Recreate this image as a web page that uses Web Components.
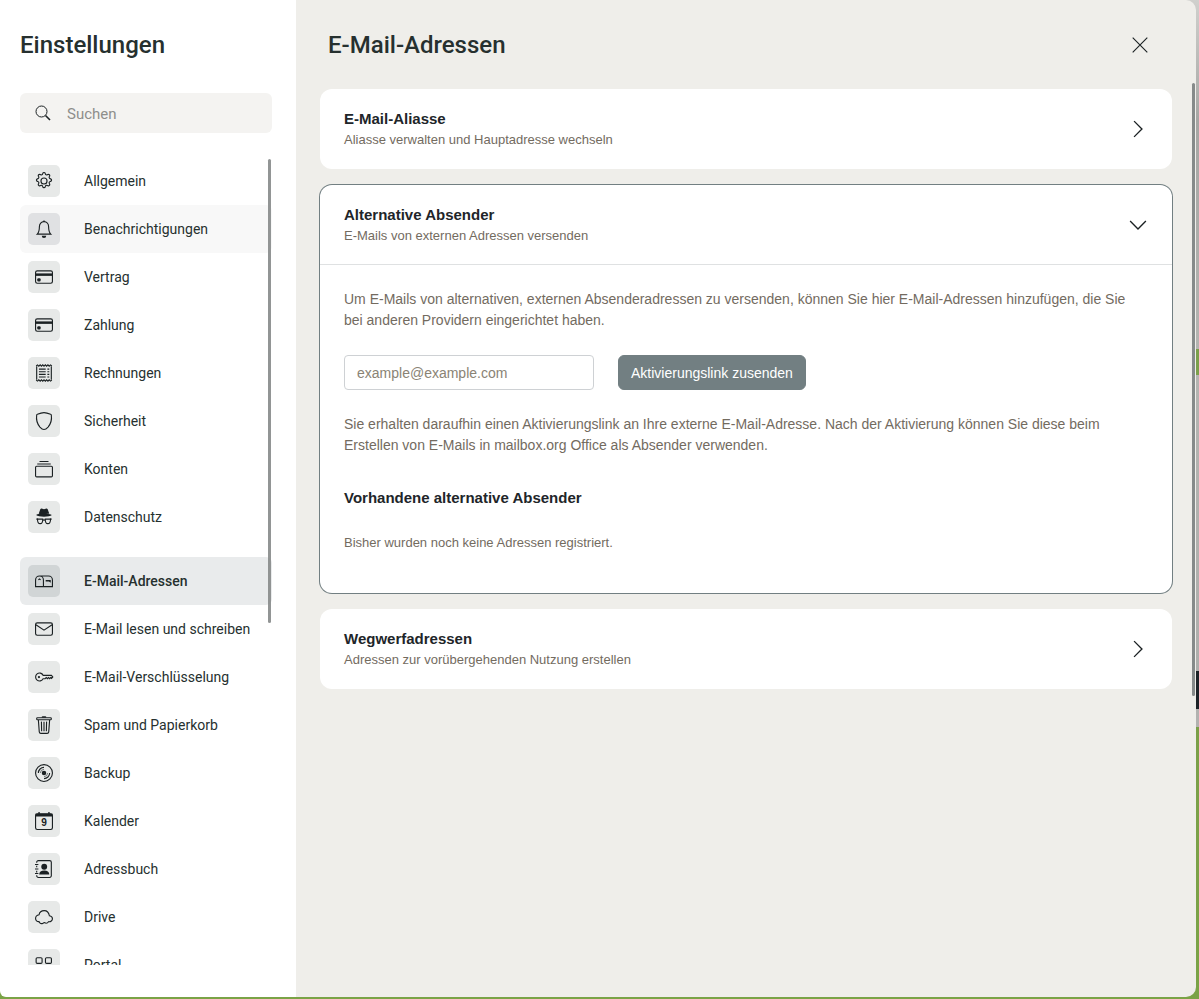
<!DOCTYPE html>
<html lang="de">
<head>
<meta charset="utf-8">
<meta name="viewport" content="width=device-width, initial-scale=1">
<title>Einstellungen</title>
<style>
    html, body {
        height: 100%;
        margin: 0;
    }

    body {
        font-family: "Liberation Sans", Arial, sans-serif;
        font-size: 14px;
        line-height: 21px;
        color: #736b5f;
        background: linear-gradient(#d0d0cd 0, #a6a6a4 120px, #b4b4b1 349px, #7ca04c 349px, #7ca04c 375px, #b4b4b1 375px, #aeaeac 671px, #1d2328 671px, #1d2328 709px, #b2b2b0 709px, #b2b2b0 727px, #7a9f48 727px, #7aa346 100%);
        --ui-font: Roboto, "Noto Sans", sans-serif;
        --ink: #26302f;
        --surface: #efeeea;
    }
</style>
</head>
<body>

<settings-dialog>
    <settings-sidebar slot="sidebar" heading="Einstellungen">
        <nav-item icon="gear">Allgemein</nav-item>
        <nav-item icon="bell" hovered>Benachrichtigungen</nav-item>
        <nav-item icon="card">Vertrag</nav-item>
        <nav-item icon="card">Zahlung</nav-item>
        <nav-item icon="receipt">Rechnungen</nav-item>
        <nav-item icon="shield">Sicherheit</nav-item>
        <nav-item icon="collection">Konten</nav-item>
        <nav-item icon="incognito">Datenschutz</nav-item>
        <nav-item icon="mailbox" group active>E-Mail-Adressen</nav-item>
        <nav-item icon="envelope">E-Mail lesen und schreiben</nav-item>
        <nav-item icon="key">E-Mail-Verschlüsselung</nav-item>
        <nav-item icon="trash">Spam und Papierkorb</nav-item>
        <nav-item icon="disc">Backup</nav-item>
        <nav-item icon="calendar">Kalender</nav-item>
        <nav-item icon="contacts">Adressbuch</nav-item>
        <nav-item icon="cloud">Drive</nav-item>
        <nav-item icon="grid">Portal</nav-item>
    </settings-sidebar>
    <settings-page heading="E-Mail-Adressen">
        <settings-card heading="E-Mail-Aliasse" hint="Aliasse verwalten und Hauptadresse wechseln"></settings-card>
        <settings-card heading="Alternative Absender" hint="E-Mails von externen Adressen versenden" open>
            <sender-form></sender-form>
        </settings-card>
        <settings-card heading="Wegwerfadressen" hint="Adressen zur vorübergehenden Nutzung erstellen"></settings-card>
    </settings-page>
</settings-dialog>

<script>
'use strict'

const icons = {
    search: '<circle cx="6.5" cy="6.5" r="5.500"/><path d="M10.500 10.500l4.500 4.500" stroke-width="1.600"/>',
    gear: '<circle cx="8" cy="8" r="2.700"/><path d="M6.900 1.300c.3-1.100 1.900-1.100 2.200 0l.2.500c.2.700 1 1 1.600.7l.5-.3c1-.5 2.100.6 1.600 1.600l-.3.500c-.3.600 0 1.400.7 1.600l.5.200c1.100.3 1.100 1.900 0 2.200l-.5.200c-.7.200-1 1-.7 1.600l.3.500c.5 1-.6 2.100-1.600 1.600l-.5-.3c-.6-.3-1.400 0-1.600.7l-.2.500c-.3 1.100-1.900 1.100-2.200 0l-.2-.5c-.2-.7-1-1-1.600-.7l-.5.300c-1 .5-2.100-.6-1.600-1.600l.3-.5c.3-.6 0-1.400-.7-1.600l-.5-.2c-1.100-.3-1.100-1.900 0-2.200l.5-.2c.7-.2 1-1 .7-1.600l-.3-.5c-.5-1 .6-2.100 1.600-1.600l.5.300c.6.300 1.400 0 1.600-.7z"/>',
    bell: '<path d="M8 1.400C5.600 1.400 3.900 3.400 3.900 6c0 2-.3 5-1.900 6.500h12C12.400 11 12.100 8 12.100 6c0-2.600-1.700-4.600-4.100-4.600z"/><path d="M6 14h4a2 2 0 0 1-4 0zM7 1.500a1 1 0 0 1 2 0z" class="fill"/>',
    card: '<rect x=".5" y="2.500" width="15" height="11" rx="1.500"/><path d="M0 4.800h16v2.200H0z" class="fill"/><rect x="2" y="9" width="3" height="3" rx="1" class="fill"/>',
    receipt: '<path d="M1.500 2v12M14.500 2v12"/><path d="M1 1.700l1.200-.9L3.400 2l1.200-1.200L5.700 2l1.200-1.200L8 2l1.200-1.200L10.300 2l1.200-1.200L12.600 2l1.200-1.200L15 1.700M1 14.300l1.200.9L3.400 14l1.200 1.200L5.700 14l1.200 1.200L8 14l1.200 1.200 1.100-1.200 1.200 1.200 1.100-1.200 1.200 1.200 1.200-.9"/><path d="M3.500 4.500h6M3.500 6.900h6M3.500 9.200h6M3.500 11.500h6M11 4.500h1.700M11 6.900h1.700M11 9.200h1.700M11 11.500h1.700"/>',
    shield: '<path d="M8 .5c-1.600 0-4.700 1-5.900 1.500a.8.8 0 0 0-.6.700c-.7 5 .9 8.400 2.900 10.700C5.700 14.800 7.200 15.500 8 15.500s2.300-.7 3.600-2.100c2-2.300 3.600-5.700 2.900-10.700a.8.8 0 0 0-.6-.7C12.700 1.500 9.600.5 8 .5z"/>',
    collection: '<rect x=".5" y="5.500" width="15" height="9.500" rx="1"/><path d="M2 3.500h12M4 1.300h8"/>',
    incognito: '<path d="M4.700 1.200c.4-.7 1.100-.9 1.800-.5.900.5 2.100.5 3 0 .7-.4 1.400-.2 1.800.5L12.700 5H3.300zM1 6.300C3 4.900 5.500 5.200 8 5.200s5 0 7 1.100c-1 1-4 1.400-7 1.400s-6-.4-7-1.400z" class="fill"/><path d="M2.200 9.900h4.700c0 2.300-.6 4-2.300 4s-2.400-1.700-2.400-4zM9.100 9.900h4.700c0 2.300-.7 4-2.400 4s-2.300-1.700-2.300-4z"/><path d="M6.900 11c.6-.5 1.600-.5 2.200 0M1.200 9.900h1.500M14.800 9.900h-1.500"/>',
    mailbox: '<path d="M4 3.500h8A3.500 3.500 0 0 1 15.500 7v6H.5V7a3.500 3.500 0 0 1 7 0v6M3 7l1-.8L5 7"/><path d="M9.500 7.200H14v2.400l-1.600-1.200H9.500z" class="fill"/>',
    envelope: '<rect x=".5" y="2.500" width="15" height="11" rx="1.500"/><path d="M.8 4.200L8 9l7.200-4.800"/>',
    key: '<path d="M7.200 6.500A3.500 3.500 0 1 0 7.200 9.500H9l1-1 1 1 1-1 1 1 1-1 .7.700 1.100-1.200-1.200-1.500z"/><circle cx="3.500" cy="8" r="1" class="fill"/>',
    trash: '<rect x="1.500" y="1.500" width="13" height="1.800" rx=".7"/><path d="M3 3.500l.8 10.600c.1.800.6 1.300 1.400 1.300h5.600c.8 0 1.300-.5 1.400-1.300L13 3.500M5.700 5l.2 8.500M8 5v8.500M10.300 5l-.2 8.500"/><path d="M6 1.500a1 1 0 0 1 1-1.200h2a1 1 0 0 1 1 1.200z" class="fill"/>',
    disc: '<circle cx="8" cy="8" r="7.500"/><circle cx="8" cy="8" r="2" class="fill"/><path d="M3 8a5 5 0 0 1 5-5M8 13a5 5 0 0 0 5-5"/><path d="M4.800 8A3.200 3.200 0 0 1 8 4.800M8 11.200A3.200 3.200 0 0 0 11.200 8" stroke-width=".5"/>',
    calendar: '<rect x=".5" y="1.500" width="15" height="14" rx="1.500"/><path d="M.5 1.500h15V4H.5zM3 0h1.200v2H3zM11.800 0H13v2h-1.200z" class="fill"/><text x="8" y="12.800" text-anchor="middle" font-size="9" font-weight="bold" class="fill">9</text>',
    contacts: '<path d="M1.500 2.500V2A1.500 1.500 0 0 1 3 .5h10A1.500 1.500 0 0 1 14.500 2v12a1.500 1.500 0 0 1-1.500 1.500H3A1.500 1.500 0 0 1 1.500 14v-.5M1.500 5v1.500M1.500 9.500V11M0 4h3M0 8h3M0 12h3"/><circle cx="8.200" cy="6" r="2.600" class="fill"/><path d="M3.700 12.800c0-2.300 1.800-3.500 4.500-3.500s4.500 1.200 4.500 3.500z" class="fill"/>',
    cloud: '<path d="M4.300 13.200c.7.700 1.600.9 2.500.5.700-.3 1-.7 1.400-.7.500 0 .8.500 1.600.5 1 0 1.700-.4 2.200-1.300 2 .3 3.500-1 3.500-2.600 0-1.500-1-2.400-2.700-2.700C12.300 4 10.600 2.300 8.200 2.300 5.800 2.300 4 3.800 3.600 6 1.700 6.300.5 7.600.5 9.300c0 1.800 1.300 2.900 3.100 2.800.1.400.3.800.7 1.100z"/>',
    grid: '<rect x="1" y="1.500" width="5.300" height="5" rx="1"/><rect x="9.300" y="1.500" width="5.300" height="5" rx="1"/><rect x="1" y="9.500" width="5.300" height="5" rx="1"/><rect x="9.300" y="9.500" width="5.300" height="5" rx="1"/>',
    close: '<path d="M1.500 1.500l13 13M14.500 1.500l-13 13"/>',
    right: '<path d="M4.500 1l7 7-7 7" stroke-width="1.200"/>',
    down: '<path d="M1 4.500l7 7 7-7" stroke-width="1.200"/>',
};


class UiIcon extends HTMLElement {

    constructor() {
        super();

        this.attachShadow({mode: 'open'}).innerHTML = `
            <style>
                :host { display: block; width: 18px; height: 18px; color: #1b2123; }
                svg { display: block; width: 100%; height: 100%; fill: none; stroke: currentColor; overflow: visible; font-family: "Liberation Sans", sans-serif; }
                .fill { fill: currentColor; stroke: none; }
            </style>
            <svg viewBox="0 0 16 16" aria-hidden="true">${icons[this.getAttribute('name')]}</svg>
        `;
    }
}

customElements.define('ui-icon', UiIcon);


class SettingsDialog extends HTMLElement {

    constructor() {
        super();

        this.attachShadow({mode: 'open'}).innerHTML = `
            <style>
                :host {
                    display: grid;
                    grid-template-columns: 296px 1fr;
                    grid-template-rows: minmax(0, 1fr);
                    box-sizing: border-box;
                    height: 100vh;
                    padding: 0 3px 2px 0;
                }
                aside, main { min-width: 0; min-height: 0; }
                aside { background: #fff; border-bottom-left-radius: 6px; }
                main { background: var(--surface); border-radius: 0 10px 10px 0; }
            </style>
            <aside><slot name="sidebar"></slot></aside>
            <main><slot></slot></main>
        `;
    }
}

customElements.define('settings-dialog', SettingsDialog);


class SettingsSidebar extends HTMLElement {

    constructor() {
        super();

        this.attachShadow({mode: 'open'}).innerHTML = `
            <style>
                :host {
                    display: flex;
                    flex-direction: column;
                    gap: 24px;
                    box-sizing: border-box;
                    height: 100%;
                    padding: 24px 24px 32px 20px;
                    font-family: var(--ui-font);
                    color: var(--ink);
                }
                h1 { margin: 0 0 3px; font-size: 24px; line-height: 42px; font-weight: 500; }
                label {
                    display: flex;
                    align-items: center;
                    gap: 16px;
                    box-sizing: border-box;
                    flex: none;
                    height: 40px;
                    padding: 0 15px;
                    border-radius: 6px;
                    background: #f4f3f1;
                }
                label ui-icon { width: 16px; height: 16px; }
                input { flex: 1; min-width: 0; height: 22px; border: 0; padding: 2px 0 0; outline: 0; background: none; font: inherit; font-size: 15px; color: inherit; }
                input::placeholder { color: #8e8e8b; opacity: 1; }
                .scroller { position: relative; flex: 1; min-height: 0; }
                nav { height: 100%; overflow: auto; scrollbar-width: none; }
                .thumb { position: absolute; top: 2px; right: 1px; width: 3px; height: 464px; border-radius: 2px; background: #868a8a; opacity: .9; }
            </style>
            <h1>${this.getAttribute('heading')}</h1>
            <label>
                <ui-icon name="search"></ui-icon>
                <input type="search" placeholder="Suchen" aria-label="Suchen">
            </label>
            <div class="scroller">
                <nav><slot></slot></nav>
                <div class="thumb"></div>
            </div>
        `;
    }
}

customElements.define('settings-sidebar', SettingsSidebar);


class NavItem extends HTMLElement {

    constructor() {
        super();

        this.attachShadow({mode: 'open'}).innerHTML = `
            <style>
                :host { display: block; --tile: #e7e9e8; }
                :host([group]) { margin-top: 16px; }
                :host([hovered]) { --tile: #e0e1e3; --row: #f8f8f8; }
                :host([active]) { --tile: #d1d5d6; --row: #e9ebec; font-weight: 500; }
                a {
                    display: flex;
                    align-items: center;
                    gap: 24px;
                    height: 48px;
                    padding: 0 8px;
                    border-radius: 6px;
                    background: var(--row, none);
                    font-size: 14px;
                    color: inherit;
                    text-decoration: none;
                    white-space: nowrap;
                }
                .tile { display: grid; place-items: center; width: 32px; height: 32px; border-radius: 5px; background: var(--tile); }
            </style>
            <a href="#">
                <span class="tile"><ui-icon name="${this.getAttribute('icon')}"></ui-icon></span>
                <slot></slot>
            </a>
        `;
    }
}

customElements.define('nav-item', NavItem);


class SettingsPage extends HTMLElement {

    constructor() {
        super();

        this.attachShadow({mode: 'open'}).innerHTML = `
            <style>
                :host { display: flex; flex-direction: column; height: 100%; }
                header {
                    display: flex;
                    align-items: center;
                    justify-content: space-between;
                    flex: none;
                    box-sizing: border-box;
                    height: 81px;
                    padding: 8px 43px 0 32px;
                    font-family: var(--ui-font);
                    color: var(--ink);
                }
                h2 { margin: 0; font-size: 24px; line-height: 40px; font-weight: 500; }
                button { padding: 0 4px; border: 0; background: none; }
                .scroller { position: relative; flex: 1; min-height: 0; }
                .cards { display: flex; flex-direction: column; gap: 16px; box-sizing: border-box; height: 100%; padding: 8px 24px; overflow: auto; scrollbar-width: none; }
                .thumb { position: absolute; top: 2px; right: 1px; width: 3px; height: 613px; border-radius: 2px; background: #868a8a; }
            </style>
            <header>
                <h2>${this.getAttribute('heading')}</h2>
                <button type="button" aria-label="Schließen"><ui-icon name="close"></ui-icon></button>
            </header>
            <div class="scroller">
                <div class="cards"><slot></slot></div>
                <div class="thumb"></div>
            </div>
        `;
    }
}

customElements.define('settings-page', SettingsPage);


class SettingsCard extends HTMLElement {

    #button
    #icon

    constructor() {
        super();

        const shadow = this.attachShadow({mode: 'open'});

        shadow.innerHTML = `
            <style>
                :host { display: block; flex: none; border-radius: 12px; background: #fff; }
                :host([open]) { box-shadow: 0 0 0 1px #727f82; }
                button {
                    display: flex;
                    align-items: center;
                    justify-content: space-between;
                    box-sizing: border-box;
                    width: 100%;
                    height: 80px;
                    padding: 0 24px;
                    border: 0;
                    border-bottom: 1px solid transparent;
                    background: none;
                    font: inherit;
                    color: inherit;
                    text-align: left;
                }
                :host([open]) button { border-bottom-color: #dfe1e2; }
                strong, small { display: block; }
                strong { font-size: 15px; color: #212529; }
                small { font-size: 13px; }
                ui-icon { margin-right: 1px; }
                .body { display: none; padding: 24px 32px 24px 24px; }
                :host([open]) .body { display: block; }
            </style>
            <button type="button">
                <span>
                    <strong>${this.getAttribute('heading')}</strong>
                    <small>${this.getAttribute('hint')}</small>
                </span>
                <span class="icon"></span>
            </button>
            <div class="body"><slot></slot></div>
        `;

        this.#button = shadow.querySelector('button');
        this.#icon = shadow.querySelector('.icon');

        this.toggle = this.toggle.bind(this);
        this.#button.addEventListener('click', this.toggle);

        this.update();
    }

    toggle() {
        this.toggleAttribute('open');
        this.update();
    }

    update() {
        const open = this.hasAttribute('open');
        this.#button.setAttribute('aria-expanded', open);
        this.#icon.innerHTML = `<ui-icon name="${open ? 'down' : 'right'}"></ui-icon>`;
    }
}

customElements.define('settings-card', SettingsCard);


class SenderForm extends HTMLElement {

    constructor() {
        super();

        this.attachShadow({mode: 'open'}).innerHTML = `
            <style>
                :host { display: block; }
                p { margin: 0; }
                form { display: flex; gap: 24px; margin: 24px 0; }
                input, button { box-sizing: border-box; height: 35px; padding: 0 12px; border: 1px solid #ced1d4; border-radius: 4px; font: inherit; }
                input { width: 250px; color: #212529; background: #fff; }
                input::placeholder { color: #8a8375; opacity: 1; }
                button { padding-top: 1px; border-color: #727f82; border-radius: 6px; background: #727f82; color: #fff; }
                h3 { margin: 32px 0 24px; font-size: 15px; line-height: 20px; color: #212529; }
                .empty { font-size: 13px; margin-bottom: 16px; }
            </style>
            <p>Um E-Mails von alternativen, externen Absenderadressen zu versenden, können Sie hier E-Mail-Adressen hinzufügen, die Sie bei anderen Providern eingerichtet haben.</p>
            <form>
                <input type="email" placeholder="example@example.com" aria-label="E-Mail-Adresse">
                <button type="button">Aktivierungslink zusenden</button>
            </form>
            <p>Sie erhalten daraufhin einen Aktivierungslink an Ihre externe E-Mail-Adresse. Nach der Aktivierung können Sie diese beim Erstellen von E-Mails in mailbox.org Office als Absender verwenden.</p>
            <h3>Vorhandene alternative Absender</h3>
            <p class="empty">Bisher wurden noch keine Adressen registriert.</p>
        `;
    }
}

customElements.define('sender-form', SenderForm);
</script>
</body>
</html>
